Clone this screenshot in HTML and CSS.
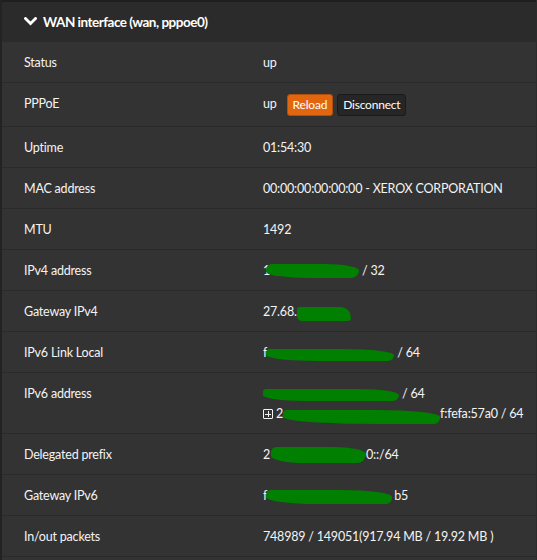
FILE: index.html
```html
<!DOCTYPE html>
<html>
<head>
<meta charset="utf-8">
<link rel="stylesheet" href="styles.css">
</head>
<body>
<div class="panel">
  <div class="panel-heading">
    <svg class="chev" width="13" height="9" viewBox="0 0 13 9"><polyline points="1.5,1.5 6.5,6.5 11.5,1.5" fill="none" stroke="#fff" stroke-width="2.8" stroke-linecap="square"/></svg>
    <span class="title">WAN interface (wan, pppoe0)</span>
  </div>
  <table class="info">
    <tr><td class="lbl">Status</td><td class="val">up</td></tr>
    <tr><td class="lbl">PPPoE</td><td class="val">up <button class="btn btn-primary">Reload</button><button class="btn btn-default">Disconnect</button></td></tr>
    <tr><td class="lbl">Uptime</td><td class="val">01:54:30</td></tr>
    <tr><td class="lbl">MAC address</td><td class="val">00:00:00:00:00:00 - XEROX CORPORATION</td></tr>
    <tr><td class="lbl">MTU</td><td class="val">1492</td></tr>
    <tr><td class="lbl">IPv4 address</td><td class="val">1<span class="blob b-ipv4"></span> / 32</td></tr>
    <tr><td class="lbl">Gateway IPv4</td><td class="val">27.68.<span class="blob b-gw4"></span></td></tr>
    <tr><td class="lbl">IPv6 Link Local</td><td class="val">f<span class="blob b-ll"></span> / 64</td></tr>
    <tr><td class="lbl">IPv6 address</td><td class="val"><div><span class="blob b-v6a"></span> / 64</div><div><span class="plusbox"></span> 2<span class="blob b-v6b"></span>f:fefa:57a0 / 64</div></td></tr>
    <tr><td class="lbl">Delegated prefix</td><td class="val">2<span class="blob b-pre"></span>0::/64</td></tr>
    <tr><td class="lbl">Gateway IPv6</td><td class="val">f<span class="blob b-gw6"></span>b5</td></tr>
    <tr><td class="lbl">In/out packets</td><td class="val">748989 / 149051(917.94 MB / 19.92 MB )</td></tr>
    <tr><td class="lbl">&nbsp;</td><td class="val">&nbsp;</td></tr>
  </table>
</div>
</body>
</html>
```
FILE: styles.css
```css
html, body {
  margin: 0;
  padding: 0;
  background: #333333;
}
body {
  font-family: Lato, "Liberation Sans", sans-serif;
  font-size: 12.5px;
  letter-spacing: -0.2px;
  color: #f4f4f4;
  overflow: hidden;
  height: 560px;
}
.panel {
  border-left: 2px solid #232323;
  border-right: 1px solid #2c2c2c;
  min-height: 560px;
  box-sizing: border-box;
}
.panel-heading {
  background: #2b2b2b;
  border-top: 2px solid #1f1f1f;
  display: flex;
  align-items: center;
  padding-left: 22px;
  box-sizing: border-box;
  height: 42px;
}
.chev {
  display: block;
  margin-right: 6px;
  margin-top: -2px;
}
.title {
  font-weight: bold;
  font-size: 13.5px;
  letter-spacing: -0.5px;
  color: #fff;
}
.info {
  width: 100%;
  border-collapse: collapse;
}
.info td {
  padding: 11px 0 9px;
  line-height: 20px;
  vertical-align: top;
  border-bottom: 1px solid #2a2a2a;
}
.info td.lbl {
  width: 239px;
  padding-left: 22px;
}
.btn {
  font-family: Lato, "Liberation Sans", sans-serif;
  font-size: 12px;
  letter-spacing: -0.2px;
  line-height: 18px;
  height: 22px;
  box-sizing: border-box;
  padding: 1px 5px;
  border-radius: 3px;
  color: #fff;
  vertical-align: top;
  margin-top: 0;
  margin-bottom: 1px;
}
.btn-primary {
  background: #e2650f;
  border: 1px solid #b0500c;
  margin-left: 7px;
}
.btn-default {
  background: #262626;
  border: 1px solid #1a1a1a;
  margin-left: 4px;
}
.blob {
  display: inline-block;
  background: #007f00;
  vertical-align: middle;
}
.b-ipv4 {
  width: 93px;
  height: 14px;
  border-radius: 6px 40% 8px 50% / 6px 50% 8px 50%;
  margin-left: -4px;
  margin-top: -2px;
}
.b-gw4 {
  width: 54px;
  height: 14px;
  border-radius: 3px 12px 4px 6px;
  margin-top: 3px;
}
.b-ll {
  width: 128px;
  height: 12px;
  border-radius: 4px 40% 6px 40% / 4px 50% 6px 50%;
  margin-left: -1px;
  margin-top: 2px;
}
.b-v6a {
  width: 136px;
  height: 12px;
  border-radius: 3px 30% 6px 30% / 3px 50% 6px 50%;
  margin-top: 1px;
}
.b-v6b {
  width: 157px;
  height: 14px;
  border-radius: 4px 40% 6px 60% / 4px 50% 6px 50%;
  margin-top: 4px;
}
.b-pre {
  width: 95px;
  height: 16px;
  border-radius: 6px 40% 10px 40% / 6px 50% 10px 50%;
  margin-left: 1px;
  margin-top: -2px;
}
.b-gw6 {
  width: 126px;
  height: 14px;
  border-radius: 5px 40% 6px 40% / 5px 50% 6px 50%;
  margin-left: -1px;
  margin-right: 2px;
}
.plusbox {
  display: inline-block;
  width: 8px;
  height: 8px;
  border: 1px solid #f4f4f4;
  border-radius: 1px;
  vertical-align: -1px;
  position: relative;
}
.plusbox::before, .plusbox::after {
  content: "";
  position: absolute;
  background: #f4f4f4;
}
.plusbox::before {
  left: 1px; right: 1px; top: 3.5px; height: 1px;
}
.plusbox::after {
  top: 1px; bottom: 1px; left: 3.5px; width: 1px;
}
```
